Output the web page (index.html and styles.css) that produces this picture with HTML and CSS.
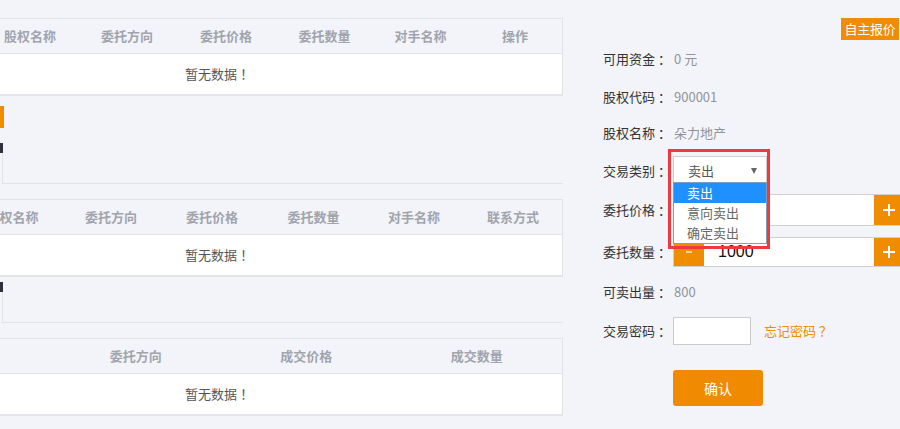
FILE: index.html
```html
<!DOCTYPE html>
<html lang="zh-CN">
<head>
<meta charset="utf-8">
<title>股权交易</title>
<link rel="stylesheet" href="styles.css">
</head>
<body>
<div class="page">
  <div class="left">
    <div class="tbl t1">
      <div class="thead">
        <span>股权名称</span><span>委托方向</span><span>委托价格</span><span>委托数量</span><span>对手名称</span><span>操作</span>
      </div>
      <div class="tbody">暂无数据<span class="p">！</span></div>
    </div>
    <div class="title-mark"></div>
    <div class="tabbox"></div>
    <div class="tbl t2">
      <div class="thead">
        <span>股权名称</span><span>委托方向</span><span>委托价格</span><span>委托数量</span><span>对手名称</span><span>联系方式</span>
      </div>
      <div class="tbody">暂无数据<span class="p">！</span></div>
    </div>
    <div class="tabbox tabbox2"></div>
    <div class="tbl t3">
      <div class="thead">
        <span>股权名称</span><span>委托方向</span><span>成交价格</span><span>成交数量</span>
      </div>
      <div class="tbody">暂无数据<span class="p">！</span></div>
    </div>
  </div>

  <div class="right">
    <div class="quote-row"><button class="quote">自主报价</button></div>
    <div class="row r1"><span class="lbl">可用资金<span class="c">：</span></span><span class="val">0 元</span></div>
    <div class="row r2"><span class="lbl">股权代码<span class="c">：</span></span><span class="val">900001</span></div>
    <div class="row r3"><span class="lbl">股权名称<span class="c">：</span></span><span class="val">朵力地产</span></div>
    <div class="row r4"><span class="lbl">交易类别<span class="c">：</span></span>
      <div class="sel">
        <span class="sel-text">卖出</span>
        <span class="arrow"></span>
        <div class="opts">
          <div class="opt on">卖出</div>
          <div class="opt">意向卖出</div>
          <div class="opt">确定卖出</div>
        </div>
        <div class="hl"></div>
      </div>
    </div>
    <div class="row r5"><span class="lbl">委托价格<span class="c">：</span></span>
      <div class="grp">
        <span class="btn minus"><svg width="8" height="4" viewBox="0 0 8 4"><line x1="1" y1="2" x2="7" y2="2" stroke="#fff" stroke-opacity="0.8" stroke-width="1.5"/></svg></span>
        <span class="num"></span>
        <span class="btn plus"><svg width="12" height="12" viewBox="0 0 12 12"><path d="M6 0v12M0 6h12" stroke="#fff" stroke-width="2"/></svg></span>
      </div>
    </div>
    <div class="row r6"><span class="lbl">委托数量<span class="c">：</span></span>
      <div class="grp">
        <span class="btn minus"><svg width="8" height="4" viewBox="0 0 8 4"><line x1="1" y1="2" x2="7" y2="2" stroke="#fff" stroke-opacity="0.8" stroke-width="1.5"/></svg></span>
        <span class="num">1000</span>
        <span class="btn plus"><svg width="12" height="12" viewBox="0 0 12 12"><path d="M6 0v12M0 6h12" stroke="#fff" stroke-width="2"/></svg></span>
      </div>
    </div>
    <div class="row r7"><span class="lbl">可卖出量<span class="c">：</span></span><span class="val">800</span></div>
    <div class="row r8"><span class="lbl">交易密码<span class="c">：</span></span><span class="pw"></span><span class="forgot">忘记密码<span class="q">？</span></span></div>
    <div class="row r9"><button class="ok">确认</button></div>
  </div>
</div>
</body>
</html>
```

FILE: styles.css
```css
* { box-sizing: border-box; }
html, body { margin: 0; }
body {
  width: 900px;
  height: 429px;
  overflow: hidden;
  background: #f3f4f9;
  font-family: "Noto Sans CJK SC", "Liberation Sans", sans-serif;
  font-size: 13px;
  color: #333;
}
.p { font-family: "Noto Sans CJK JP", "Noto Sans CJK SC", sans-serif; }
.c { margin-left: 3px; }
.q { margin-left: 3px; }
.page { display: flex; }

/* left column */
.left {
  width: 563px;
  flex: none;
  overflow: hidden;
  padding-top: 18px;
}
.tbl {
  border: 1px solid #e2e3e8;
  border-bottom: 2px solid #e4e5ea;
}
.thead {
  display: grid;
  height: 35px;
  align-items: center;
  text-align: center;
  font-weight: bold;
  color: #a0a4ad;
  border-bottom: 1px solid #e2e3e8;
  padding-bottom: 1px;
}
.tbody {
  height: 40px;
  background: #fff;
  display: flex;
  align-items: center;
  color: #555;
  padding-bottom: 1px;
}
.t1 { margin-left: -19px; width: 582px; }
.t1 .thead { grid-template-columns: 96px 98px 100px 97px 95px 94px; }
.t1 .tbody { padding-left: 203px; }
.t2 { margin-left: -37px; width: 600px; margin-top: 15px; }
.t2 .thead { grid-template-columns: 97px 100px 102px 101px 100px 98px; }
.t2 .tbody { padding-left: 221px; }
.t3 { margin-left: -121px; width: 684px; margin-top: 15px; }
.t3 .thead { grid-template-columns: repeat(4, 1fr); }
.t3 .tbody { padding-left: 305px; }

.title-mark {
  width: 4px;
  height: 22px;
  background: #f08c00;
  margin-top: 10px;
}
.tabbox {
  position: relative;
  margin-top: 15px;
  margin-left: 2px;
  height: 41px;
  border-left: 1px solid #e2e3e8;
  border-bottom: 1px solid #e2e3e8;
}
.tabbox::before {
  content: "";
  position: absolute;
  left: -3px;
  top: 0;
  width: 3px;
  height: 10px;
  background: #2e3139;
}
.tabbox2 { margin-top: 5px; }

/* right column */
.right {
  flex: 1;
  padding-top: 18px;
  padding-left: 40px;
}
.quote-row {
  display: flex;
  justify-content: flex-end;
  padding-right: 6px;
}
.quote {
  width: 58px;
  height: 22px;
  padding: 0 0 1px;
  border: 0;
  background: #f08c00;
  color: #fff;
  font: inherit;
  font-size: 13px;
  letter-spacing: -0.2px;
}
.row {
  display: flex;
  align-items: center;
  height: 30px;
  padding-bottom: 2px;
}
.r1 { margin-top: 4px; }
.r2 { margin-top: 8px; }
.r3 { margin-top: 6px; }
.r4 { margin-top: 8px; }
.r5 { margin-top: 8px; height: 32px; padding-bottom: 0; }
.r6 { margin-top: 11px; padding-bottom: 0; }
.r7 { margin-top: 10px; }
.r8 { margin-top: 10px; height: 28px; padding-bottom: 0; }
.r9 { margin-top: 25px; height: 36px; padding-left: 70px; padding-bottom: 0; }
.r4 { padding-bottom: 0; }

.lbl { width: 70px; flex: none; color: #333; }
.r4 .lbl, .r5 .lbl, .r6 .lbl, .r8 .lbl { padding-bottom: 2px; }
.val { color: #8f949c; padding-left: 1px; }

.sel {
  position: relative;
  width: 94px;
  height: 30px;
  border: 1px solid #ccc;
  background: #fff;
  display: flex;
  align-items: center;
  padding-left: 14px;
  padding-bottom: 1px;
  color: #555;
  z-index: 2;
}
.arrow {
  margin-left: auto;
  margin-right: 9px;
  width: 0;
  height: 0;
  border-left: 3.5px solid transparent;
  border-right: 3.5px solid transparent;
  border-top: 6px solid #666;
}
.opts {
  position: absolute;
  left: -1px;
  top: 25px;
  width: 94px;
  border: 1px solid #7f9db9;
  background: #fff;
}
.opt {
  height: 20px;
  line-height: 19px;
  padding-left: 13px;
  color: #666;
}
.opt.on { background: #1e90ff; color: #fff; }
.hl {
  position: absolute;
  left: -6px;
  top: -8px;
  width: 102px;
  height: 100px;
  border: 3px solid #f0383f;
}

.grp {
  display: flex;
  width: 232px;
  height: 100%;
  border: 1px solid #d0d0d4;
  background: #fff;
}
.btn {
  width: 30px;
  flex: none;
  background: #f08c00;
  display: flex;
  align-items: center;
  justify-content: center;
}
.num {
  flex: 1;
  display: flex;
  align-items: center;
  padding-left: 14px;
  padding-bottom: 1px;
  font-family: "Liberation Sans", sans-serif;
  font-size: 16px;
  color: #111;
}

.pw {
  width: 78px;
  height: 28px;
  border: 1px solid #ccc;
  background: #fff;
}
.forgot {
  margin-left: 13px;
  color: #f08c00;
  padding-bottom: 2px;
}
.ok {
  width: 90px;
  height: 36px;
  border: 0;
  border-radius: 3px;
  background: #f08a00;
  color: #fff;
  font: inherit;
  font-size: 14px;
  padding-bottom: 2px;
}
```
